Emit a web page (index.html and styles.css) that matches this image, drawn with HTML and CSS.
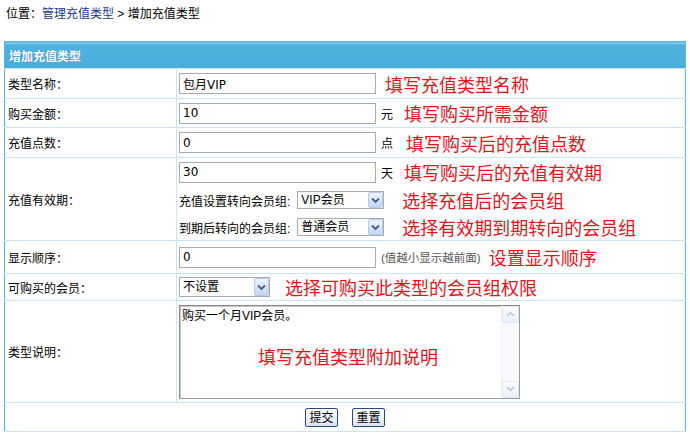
FILE: index.html
```html
<!DOCTYPE html>
<html lang="zh-CN">
<head>
<meta charset="utf-8">
<title>增加充值类型</title>
<link rel="stylesheet" href="styles.css">
</head>
<body>
<div class="crumb">位置：<a href="#">管理充值类型</a> &gt; 增加充值类型</div>
<table class="form">
  <tr class="head"><th colspan="2">增加充值类型</th></tr>
  <tr class="r1">
    <td class="label">类型名称：</td>
    <td class="field"><div class="line"><input class="txt" value="包月VIP"><span class="hint ml9">填写充值类型名称</span></div></td>
  </tr>
  <tr class="r2">
    <td class="label">购买金额：</td>
    <td class="field"><div class="line"><input class="txt" value="10"><span class="unit">元</span><span class="hint ml11">填写购买所需金额</span></div></td>
  </tr>
  <tr class="r3">
    <td class="label">充值点数：</td>
    <td class="field"><div class="line"><input class="txt" value="0"><span class="unit">点</span><span class="hint ml13">填写购买后的充值点数</span></div></td>
  </tr>
  <tr class="r4">
    <td class="label">充值有效期：</td>
    <td class="field">
      <div class="stack">
        <div class="line l1"><input class="txt" value="30"><span class="unit">天</span><span class="hint ml11">填写购买后的充值有效期</span></div>
        <div class="line l2"><span class="sub">充值设置转向会员组:</span><span class="sel w87"><select><option>VIP会员</option></select><span class="arrow"><svg width="9" height="7" viewBox="0 0 9 7"><path d="M1 1.5 L4.5 5 L8 1.5" fill="none" stroke="#4a5d80" stroke-width="1.8"/></svg></span></span><span class="hint ml18">选择充值后的会员组</span></div>
        <div class="line l3"><span class="sub">到期后转向的会员组:</span><span class="sel w87"><select><option>普通会员</option></select><span class="arrow"><svg width="9" height="7" viewBox="0 0 9 7"><path d="M1 1.5 L4.5 5 L8 1.5" fill="none" stroke="#4a5d80" stroke-width="1.8"/></svg></span></span><span class="hint ml18">选择有效期到期转向的会员组</span></div>
      </div>
    </td>
  </tr>
  <tr class="r5">
    <td class="label">显示顺序：</td>
    <td class="field"><div class="line"><input class="txt" value="0"><span class="note">(值越小显示越前面)</span><span class="hint ml8">设置显示顺序</span></div></td>
  </tr>
  <tr class="r6">
    <td class="label">可购买的会员：</td>
    <td class="field"><div class="line"><span class="sel w91 tall"><select><option>不设置</option></select><span class="arrow"><svg width="9" height="7" viewBox="0 0 9 7"><path d="M1 1.5 L4.5 5 L8 1.5" fill="none" stroke="#4a5d80" stroke-width="1.8"/></svg></span></span><span class="hint ml15">选择可购买此类型的会员组权限</span></div></td>
  </tr>
  <tr class="r7">
    <td class="label">类型说明：</td>
    <td class="field">
      <div class="ta">
        <textarea>购买一个月VIP会员。</textarea>
        <div class="scroll">
          <span class="sbtn"><svg width="9" height="6" viewBox="0 0 9 6"><path d="M1 5 L4.5 1.5 L8 5" fill="none" stroke="#b9c6dc" stroke-width="1.5"/></svg></span>
          <span class="track"></span>
          <span class="sbtn"><svg width="9" height="6" viewBox="0 0 9 6"><path d="M1 1 L4.5 4.5 L8 1" fill="none" stroke="#b9c6dc" stroke-width="1.5"/></svg></span>
        </div>
        <span class="overlay-hint">填写充值类型附加说明</span>
      </div>
    </td>
  </tr>
  <tr class="r8">
    <td colspan="2" class="actions"><button class="btn">提交</button><button class="btn">重置</button></td>
  </tr>
</table>
</body>
</html>
```

FILE: styles.css
```css
html, body {
  margin: 0;
  padding: 0;
  background: #ffffff;
}
body {
  font-family: "Liberation Sans", "Noto Sans CJK SC", sans-serif;
  font-size: 12px;
  color: #000;
}
.crumb {
  margin: 6px 0 19px 6px;
  line-height: 16px;
  height: 16px;
}
.crumb a {
  color: #1a3a8c;
  text-decoration: none;
}
.form {
  margin-left: 4px;
  width: 682px;
  border-collapse: collapse;
  border: 1px solid #5fb6e0;
}
.form th {
  height: 26px;
  padding: 0 0 0 4px;
  text-align: left;
  color: #fff;
  font-weight: bold;
  background: linear-gradient(#8ccfee 0, #8ccfee 1px, #4eb1de 2px, #4aaedc 100%);
  border-bottom: 1px solid #c8e6f5;
  text-shadow: 0 0 1px rgba(40,110,150,0.6);
}
.form td {
  padding: 0;
  border-bottom: 1px solid #c8e6f5;
  vertical-align: middle;
}
.form td.label {
  width: 168px;
  padding-left: 3px;
  border-right: 1px solid #c8e6f5;
}
.form td.field {
  padding-left: 2px;
}
.r1 td { height: 29px; }
.r2 td { height: 28px; }
.r3 td { height: 29px; }
.r4 td { height: 82px; }
.r5 td { height: 32px; }
.r6 td { height: 26px; }
.r7 td { height: 101px; }
.r8 td { height: 28px; }

.line {
  display: flex;
  align-items: center;
}
.stack {
  display: flex;
  flex-direction: column;
}
.stack .l1 { height: 28px; }
.stack .l2 { height: 28px; }
.stack .l3 { height: 26px; }

.txt {
  box-sizing: border-box;
  width: 197px;
  height: 21px;
  margin: 0;
  padding: 0 0 0 3px;
  border: 1px solid #a5acb2;
  font-family: "DejaVu Sans", "Noto Sans CJK SC", sans-serif;
  font-size: 12px;
  color: #000;
  background: #fff;
}
.unit {
  margin-left: 5px;
  font-size: 12px;
}
.sub {
  font-size: 12px;
  margin-right: 7px;
}
.note {
  margin-left: 5px;
  color: #555;
  font-size: 11.5px;
}
.hint {
  color: #e3141b;
  font-family: "Noto Sans CJK SC", sans-serif;
  font-size: 18px;
  line-height: 20px;
}
.ml8 { margin-left: 8px; }
.ml9 { margin-left: 9px; }
.ml11 { margin-left: 11px; }
.ml13 { margin-left: 13px; }
.ml15 { margin-left: 15px; }
.ml18 { margin-left: 18px; }

.sel {
  position: relative;
  display: inline-block;
  height: 18px;
}
.sel.tall { height: 20px; }
.sel.w87 { width: 87px; }
.sel.w91 { width: 91px; }
.sel select {
  -webkit-appearance: none;
  appearance: none;
  box-sizing: border-box;
  width: 100%;
  height: 100%;
  margin: 0;
  padding: 0 0 0 3px;
  border: 1px solid #a5acb2;
  border-radius: 0;
  background: #fff;
  font-family: "Liberation Sans", "Noto Sans CJK SC", sans-serif;
  font-size: 12px;
  color: #000;
}
.sel .arrow {
  position: absolute;
  right: 1px;
  top: 1px;
  bottom: 1px;
  width: 15px;
  box-sizing: border-box;
  border: 1px solid #b8caec;
  border-radius: 2px;
  background: linear-gradient(#eef3fd, #c4d5f5);
  display: flex;
  align-items: center;
  justify-content: center;
  pointer-events: none;
}

.ta {
  position: relative;
  box-sizing: border-box;
  width: 341px;
  height: 94px;
  border: 1px solid #9c9c9c;
  border-top-color: #8a8a8a;
  border-left-color: #8a8a8a;
  box-shadow: inset 1px 1px 0 #c8c8c8;
  display: flex;
  background: #fff;
}
.ta textarea {
  flex: 1;
  border: 0;
  margin: 0;
  padding: 3px 2px;
  resize: none;
  font-family: "Liberation Sans", "Noto Sans CJK SC", sans-serif;
  font-size: 12px;
  line-height: 14px;
  color: #000;
  outline: none;
  background: transparent;
}
.ta .scroll {
  width: 17px;
  display: flex;
  flex-direction: column;
  background: #f7f9fd;
  border-left: 1px solid #eef1f7;
}
.ta .sbtn {
  height: 17px;
  box-sizing: border-box;
  border: 1px solid #e1e8f4;
  border-radius: 2px;
  background: linear-gradient(#fbfcfe, #eaf0fa);
  display: flex;
  align-items: center;
  justify-content: center;
}
.ta .track { flex: 1; }
.overlay-hint {
  position: absolute;
  left: 78px;
  top: 40px;
  color: #e3141b;
  font-family: "Noto Sans CJK SC", sans-serif;
  font-size: 18px;
  line-height: 20px;
  pointer-events: none;
}

.actions {
  text-align: center;
  font-size: 0;
}
.btn {
  box-sizing: border-box;
  width: 33px;
  height: 19px;
  margin: 0 7px;
  padding: 0;
  border: 1px solid #2a4a86;
  border-radius: 2px;
  background: linear-gradient(#ffffff, #dce4f1);
  font-family: "Noto Sans CJK SC", sans-serif;
  font-size: 12px;
  line-height: 16px;
  color: #000;
}
```
